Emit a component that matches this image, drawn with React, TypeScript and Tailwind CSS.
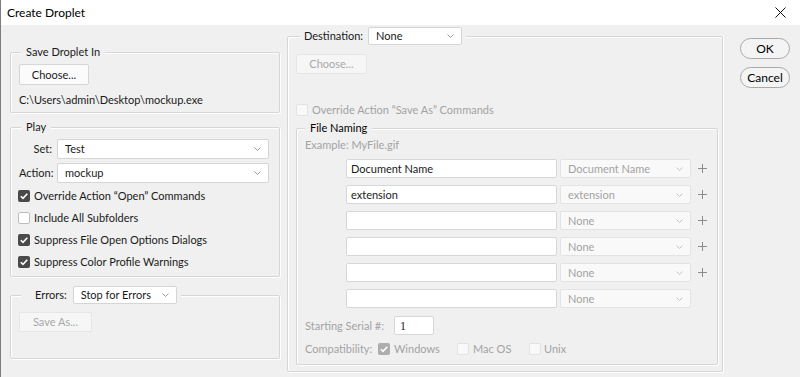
import React from "react";
import clsx from "clsx";

const fieldset =
  "border border-[#d6d6d6] rounded-[2px] shadow-[inset_1px_1px_0_#fff,1px_1px_0_#fff] min-w-0";

const Chevron = ({ color = "#9a9a9a" }: { color?: string }) => (
  <svg width="7" height="4" viewBox="0 0 7 4" className="shrink-0">
    <path d="M0.5 0.5 L3.5 3.5 L6.5 0.5" fill="none" stroke={color} strokeWidth="1" />
  </svg>
);

const Select = ({
  value,
  className,
  disabled,
}: {
  value: string;
  className?: string;
  disabled?: boolean;
}) => (
  <div
    className={clsx(
      "flex items-center justify-between rounded-[2px] border pl-[7px] pr-[7px]",
      disabled
        ? "bg-[#f9f9f9] border-[#e3e3e3] text-[#a3a3a3]"
        : "bg-white border-[#d5d5d5] text-[#1a1a1a]",
      className
    )}
  >
    <span>{value}</span>
    <Chevron color={disabled ? "#c4c4c4" : "#9a9a9a"} />
  </div>
);

const Input = ({ value, className }: { value?: string; className?: string }) => (
  <div
    className={clsx(
      "flex items-center rounded-[2px] border border-[#d7d7d7] bg-white pl-[4px]",
      className
    )}
  >
    {value}
  </div>
);

const Button = ({
  label,
  className,
  disabled,
}: {
  label: string;
  className?: string;
  disabled?: boolean;
}) => (
  <div
    className={clsx(
      "flex items-center justify-center rounded-[2px] border",
      disabled
        ? "bg-[#f6f6f6] border-[#e6e6e6] text-[#a8a8a8]"
        : "bg-[#fbfbfb] border-[#d6d6d6] text-[#1a1a1a]",
      className
    )}
  >
    {label}
  </div>
);

const Check = ({ checked, disabled }: { checked?: boolean; disabled?: boolean }) => (
  <div
    className={clsx(
      "w-[12px] h-[12px] rounded-[2px] shrink-0 flex items-center justify-center",
      checked && !disabled && "bg-[#4a4a4a]",
      checked && disabled && "bg-[#adadad]",
      !checked && !disabled && "bg-white border border-[#bdbdbd]",
      !checked && disabled && "bg-[#f9f9f9] border border-[#e2e2e2]"
    )}
  >
    {checked && (
      <svg width="12" height="12" viewBox="0 0 12 12">
        <path d="M2.8 6.2 L5 8.4 L9.3 3.8" fill="none" stroke="#fff" strokeWidth="1.6" />
      </svg>
    )}
  </div>
);

const CheckRow = ({ label, checked }: { label: string; checked?: boolean }) => (
  <div className="h-[22px] flex items-center gap-[4px]">
    <Check checked={checked} />
    <span>{label}</span>
  </div>
);

const Plus = () => (
  <svg width="9" height="9" viewBox="0 0 9 9" className="ml-[7px]">
    <path d="M4.5 0 V9 M0 4.5 H9" stroke="#8c8c8c" strokeWidth="1" />
  </svg>
);

const namingRows = [
  { text: "Document Name", pick: "Document Name", plus: true },
  { text: "extension", pick: "extension", plus: true },
  { text: "", pick: "None", plus: true },
  { text: "", pick: "None", plus: true },
  { text: "", pick: "None", plus: true },
  { text: "", pick: "None", plus: false },
];

export default function App() {
  return (
    <div className="w-[800px] h-[377px] overflow-hidden bg-[#f0f0f0] border-l border-[#7d7d7d] font-['Lato',sans-serif] text-[11px] leading-[16px] text-[#1a1a1a] flex flex-col">
      {/* title bar */}
      <div className="h-[25px] shrink-0 bg-white flex items-center justify-between pl-[6px] pr-[14px]">
        <span className="text-[12px] text-black">Create Droplet</span>
        <svg width="11" height="11" viewBox="0 0 11 11">
          <path d="M0.5 0.5 L10.5 10.5 M10.5 0.5 L0.5 10.5" stroke="#111" strokeWidth="1" />
        </svg>
      </div>

      <div className="flex pl-[9px]">
        {/* left column */}
        <div className="w-[270px] flex flex-col">
          <fieldset className={clsx(fieldset, "mt-[19px]")}>
            <legend className="ml-[10px] px-[5px] bg-[#f0f0f0]">Save Droplet In</legend>
            <div className="pt-[4px] pl-[8px] pb-[4px]">
              <Button label="Choose..." className="w-[70px] h-[21px]" />
              <div className="mt-[7px]">{"C:\\Users\\admin\\Desktop\\mockup.exe"}</div>
            </div>
          </fieldset>

          <fieldset className={clsx(fieldset, "mt-[6px]")}>
            <legend className="ml-[10px] px-[5px] bg-[#f0f0f0]">Play</legend>
            <div className="pt-[4px] pl-[8px] pr-[10px] pb-[3px]">
              <div className="flex flex-col gap-[4px]">
                <div className="flex items-center gap-[5px]">
                  <span className="w-[33px] text-right">Set:</span>
                  <Select value="Test" className="flex-1 h-[20px]" />
                </div>
                <div className="flex items-center gap-[5px]">
                  <span className="w-[33px] text-right">Action:</span>
                  <Select value="mockup" className="flex-1 h-[20px]" />
                </div>
              </div>
              <div className="mt-[2px] -ml-[1px]">
                <CheckRow label={"Override Action \u201cOpen\u201d Commands"} checked />
                <CheckRow label="Include All Subfolders" />
                <CheckRow label="Suppress File Open Options Dialogs" checked />
                <CheckRow label="Suppress Color Profile Warnings" checked />
              </div>
            </div>
          </fieldset>

          <fieldset className={clsx(fieldset, "mt-[9px]")}>
            <legend className="ml-[10px] pl-[14px] pr-[4px] bg-[#f0f0f0]">
              <div className="flex items-center gap-[6px]">
                <span>Errors:</span>
                <Select value="Stop for Errors" className="w-[104px] h-[18px]" />
              </div>
            </legend>
            <div className="pt-[8px] pl-[8px] pb-[26px]">
              <Button label="Save As..." disabled className="w-[73px] h-[20px]" />
            </div>
          </fieldset>
        </div>

        {/* right panel */}
        <fieldset className={clsx(fieldset, "ml-[7px] mt-[2px] w-[436px]")}>
          <legend className="ml-[12px] pl-[4px] pr-[4px] bg-[#f0f0f0]">
            <div className="flex items-center gap-[5px]">
              <span>Destination:</span>
              <Select value="None" className="w-[94px] h-[18px]" />
            </div>
          </legend>
          <div className="pt-[9px] pl-[8px] pr-[5px] pb-[6px]">
            <Button label="Choose..." disabled className="w-[71px] h-[20px]" />
            <div className="mt-[28px] h-[16px] flex items-center gap-[4px] text-[#a3a3a3]">
              <Check disabled />
              <span>{"Override Action \u201cSave As\u201d Commands"}</span>
            </div>

            <fieldset className={clsx(fieldset, "mt-[2px] w-[422px]")}>
              <legend className="ml-[8px] px-[5px] bg-[#f0f0f0] text-black">File Naming</legend>
              <div className="pt-[1px] pl-[8px] pb-[7px] text-[#a3a3a3]">
                <div>Example: MyFile.gif</div>
                <div className="mt-[6px] pl-[41px] flex flex-col gap-[7px]">
                  {namingRows.map((r, i) => (
                    <div key={i} className="flex items-center">
                      <Input value={r.text} className="w-[211px] h-[19px] text-[#1a1a1a]" />
                      <Select value={r.pick} disabled className="ml-[3px] w-[131px] h-[19px]" />
                      {r.plus && <Plus />}
                    </div>
                  ))}
                </div>
                <div className="mt-[8px] flex items-center">
                  <span className="w-[89px]">Starting Serial #:</span>
                  <Input
                    value="1"
                    className="w-[40px] h-[19px] text-[#1a1a1a] font-['Liberation_Serif',serif] text-[12px] pl-[5px]"
                  />
                </div>
                <div className="mt-[6px] h-[16px] flex items-center">
                  <span className="w-[73px]">Compatibility:</span>
                  <div className="w-[79px] flex items-center gap-[4px]">
                    <Check checked disabled />
                    <span>Windows</span>
                  </div>
                  <div className="w-[72px] flex items-center gap-[4px]">
                    <Check disabled />
                    <span>Mac OS</span>
                  </div>
                  <div className="flex items-center gap-[3px]">
                    <Check disabled />
                    <span>Unix</span>
                  </div>
                </div>
              </div>
            </fieldset>
          </div>
        </fieldset>

        {/* buttons */}
        <div className="ml-[17px] mt-[13px] w-[50px] flex flex-col gap-[8px]">
          <div className="h-[21px] rounded-full border border-[#a9a9a9] bg-[#f4f4f4] flex items-center justify-center text-[12px] text-black">
            OK
          </div>
          <div className="h-[21px] rounded-full border border-[#a9a9a9] bg-[#f4f4f4] flex items-center justify-center text-[12px] text-black">
            Cancel
          </div>
        </div>
      </div>
    </div>
  );
}
